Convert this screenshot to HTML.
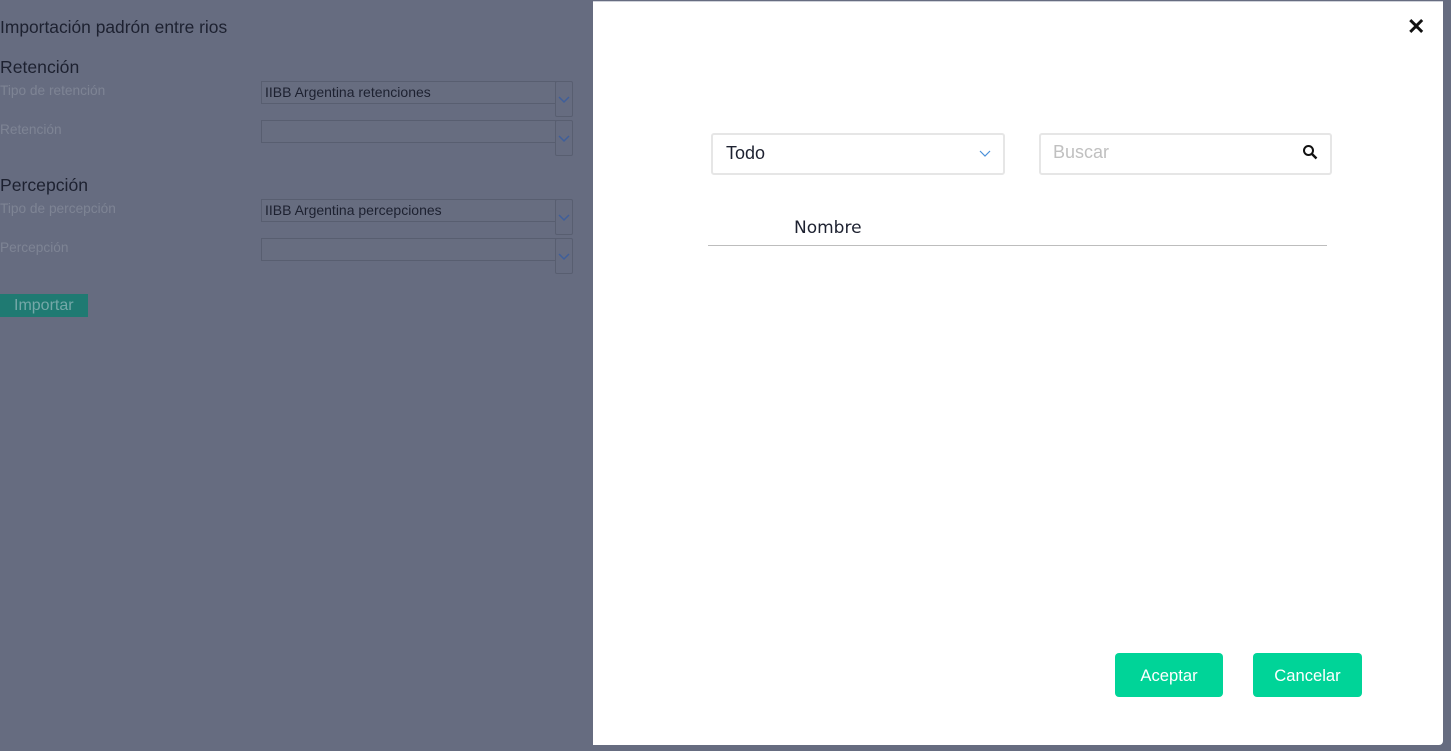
<!DOCTYPE html>
<html><head><meta charset="utf-8"><style>
*{box-sizing:border-box;margin:0;padding:0}
body{width:1451px;height:751px;overflow:hidden;background:#666c80;font-family:"Liberation Sans",sans-serif;position:relative}
.a{position:absolute}
.lbl{color:#7e8494;font-size:13.7px}
.sel{position:absolute;left:261px;width:295px;height:23px;border:1px solid #585e70;background:#676d80;color:#1d2130;font-size:14px;padding:2px 3px}
.sb{position:absolute;left:555px;width:18px;height:36px;border:1px solid #585e70;border-radius:2px}
.sb svg{position:absolute;left:2px;top:14px}
</style></head><body>
<div class="a" style="left:0;top:17px;font-size:17.4px;color:#1d2130">Importación padrón entre rios</div>
<div class="a" style="left:0;top:57px;font-size:17.6px;color:#1d2130">Retención</div>
<div class="a lbl" style="left:0;top:83px">Tipo de retención</div>
<div class="sel" style="top:81px">IIBB Argentina retenciones</div>
<div class="sb" style="top:81px"><svg width="12" height="8"><path d="M1 1l5 5 5-5" stroke="#3f5f9a" fill="none" stroke-width="1.5"/></svg></div>
<div class="a lbl" style="left:0;top:122px">Retención</div>
<div class="sel" style="top:120px"></div>
<div class="sb" style="top:120px"><svg width="12" height="8"><path d="M1 1l5 5 5-5" stroke="#3f5f9a" fill="none" stroke-width="1.5"/></svg></div>
<div class="a" style="left:0;top:175px;font-size:17.6px;color:#1d2130">Percepción</div>
<div class="a lbl" style="left:0;top:201px">Tipo de percepción</div>
<div class="sel" style="top:199px">IIBB Argentina percepciones</div>
<div class="sb" style="top:199px"><svg width="12" height="8"><path d="M1 1l5 5 5-5" stroke="#3f5f9a" fill="none" stroke-width="1.5"/></svg></div>
<div class="a lbl" style="left:0;top:240px">Percepción</div>
<div class="sel" style="top:238px"></div>
<div class="sb" style="top:238px"><svg width="12" height="8"><path d="M1 1l5 5 5-5" stroke="#3f5f9a" fill="none" stroke-width="1.5"/></svg></div>
<div class="a" style="left:0;top:294px;width:88px;height:23px;background:#1f7a72;color:#75a8a8;font-size:16px;padding:3px 0 0 14px">Importar</div>

<div class="a" style="left:593px;top:1px;width:850px;height:744px;background:#fff;border-radius:0 0 4px 0;border-top:1px solid #cfd2da"></div>
<div class="a" style="left:1407px;top:14px;font-size:22px;font-weight:bold;color:#111">✕</div>
<div class="a" style="left:711px;top:133px;width:294px;height:42px;border:2px solid #e6e6e6;border-radius:3px;font-size:18px;color:#1d2130;padding:8px 13px">Todo</div>
<svg class="a" style="left:979px;top:150px" width="12" height="7"><path d="M1 1l5 5 5-5" stroke="#4a90d9" fill="none" stroke-width="1.2"/></svg>
<div class="a" style="left:1039px;top:133px;width:293px;height:42px;border:2px solid #e6e6e6;border-radius:3px;font-size:18px;color:#c0c0c0;padding:7px 12px">Buscar</div>
<svg class="a" style="left:1302px;top:144px" width="16" height="17"><circle cx="6.5" cy="6.5" r="4.5" stroke="#111" stroke-width="2" fill="none"/><path d="M10 10l4.5 4.5" stroke="#111" stroke-width="2.4"/></svg>
<div class="a" style="left:794px;top:218px;color:#1d2130;font-family:'DejaVu Sans',sans-serif;font-size:17px">Nombre</div>
<div class="a" style="left:708px;top:245px;width:619px;height:1px;background:#bdbdbd"></div>
<div class="a" style="left:1115px;top:653px;width:108px;height:44px;background:#00d498;border-radius:4px;color:#fff;font-size:16.6px;text-align:center;line-height:46px">Aceptar</div>
<div class="a" style="left:1253px;top:653px;width:109px;height:44px;background:#00d498;border-radius:4px;color:#fff;font-size:16.6px;text-align:center;line-height:46px">Cancelar</div>
</body></html>
